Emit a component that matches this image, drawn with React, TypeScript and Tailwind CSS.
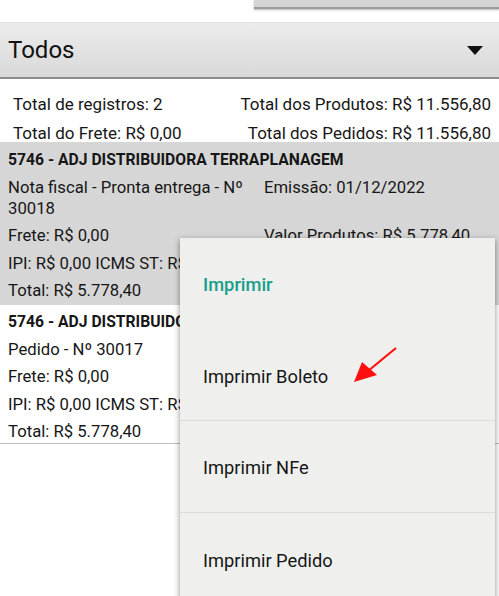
import React from 'react'

const font = { fontFamily: 'Roboto, "Noto Sans", sans-serif' }

function Card({ title, first, firstRight, right, shaded }: { title: string; first: string; firstRight?: string; right?: string; shaded?: boolean }) {
  return (
    <div className={`${shaded ? 'bg-[#d6d6d6] pt-[7px] pb-[3.5px]' : 'bg-white pt-[6.5px] pb-[0.5px] border-b border-[#bdbdbd]'} pl-2 pr-2 flex flex-col gap-[6.5px] text-[16.7px] leading-[21px] text-[#161616]`}>
      <div className="font-bold text-[15.7px] whitespace-nowrap">{title}</div>
      <div className="flex">
        <div className="w-[256px] shrink-0 pr-1">{first}</div>
        {firstRight && <div>{firstRight}</div>}
      </div>
      <div className="flex">
        <div className="w-[256px] shrink-0">Frete: R$ 0,00</div>
        {right && <div>{right}</div>}
      </div>
      <div className="whitespace-nowrap">IPI: R$ 0,00 ICMS ST: R$ 0,00</div>
      <div>Total: R$ 5.778,40</div>
    </div>
  )
}

export default function App() {
  return (
    <div className="relative w-[499px] h-[596px] overflow-hidden bg-white" style={font}>
      <div className="h-[22px] flex justify-end">
        <div className="w-[245px] h-[9px] bg-[#d4d4d4] border-b-2 border-[#9a9a9a] shadow-[0_1px_2px_rgba(0,0,0,0.3)]" />
      </div>
      <div className="h-[57px] flex items-center justify-between pl-2 pr-4 bg-gradient-to-b from-[#ececec] to-[#d9d9d9] border-t border-[#dedede] border-b-2 border-b-[#8c8c8c]">
        <span className="text-[24px] text-[#111]">Todos</span>
        <svg width="16" height="9" viewBox="0 0 16 9"><path d="M0 0h16L8 9z" fill="#111" /></svg>
      </div>
      <div className="pt-[15px] pl-[13px] pr-[8px] flex flex-col gap-[8px] text-[17px] leading-[21px] text-[#161616]">
        <div className="flex justify-between">
          <span>Total de registros: 2</span>
          <span>Total dos Produtos: R$ 11.556,80</span>
        </div>
        <div className="flex justify-between">
          <span>Total do Frete: R$ 0,00</span>
          <span>Total dos Pedidos: R$ 11.556,80</span>
        </div>
      </div>
      <div className="mt-[-2px]">
        <Card shaded title="5746 - ADJ DISTRIBUIDORA TERRAPLANAGEM" first="Nota fiscal - Pronta entrega - Nº 30018" firstRight="Emissão: 01/12/2022" right="Valor Produtos: R$ 5.778,40" />
        <Card title="5746 - ADJ DISTRIBUIDORA TERRAPLANAGEM" first="Pedido - Nº 30017" />
      </div>

      <div className="absolute left-[180px] top-[238px] w-[315px] h-[370px] bg-[#eff0ee] shadow-[0_2px_6px_rgba(0,0,0,0.45)] text-[18.3px] text-[#161616]">
        <div className="h-[93px] flex items-center pl-[23px] pt-[1px] text-[#189e8a] font-medium">Imprimir</div>
        <div className="h-[90px] flex items-center pl-[23px] pt-[3px] border-b border-[#dcdddb]">Imprimir Boleto</div>
        <div className="h-[92px] flex items-center pl-[23px] pt-[3px] border-b border-[#dcdddb]">Imprimir NFe</div>
        <div className="h-[92px] flex items-center pl-[23px] pt-[3px]">Imprimir Pedido</div>
      </div>

      <svg className="absolute left-0 top-0" width="499" height="596">
        <line x1="396" y1="348" x2="368" y2="371" stroke="#ff1010" strokeWidth="2.2" />
        <polygon points="354,382 362,362 377,375" fill="#ff1010" />
      </svg>
    </div>
  )
}
